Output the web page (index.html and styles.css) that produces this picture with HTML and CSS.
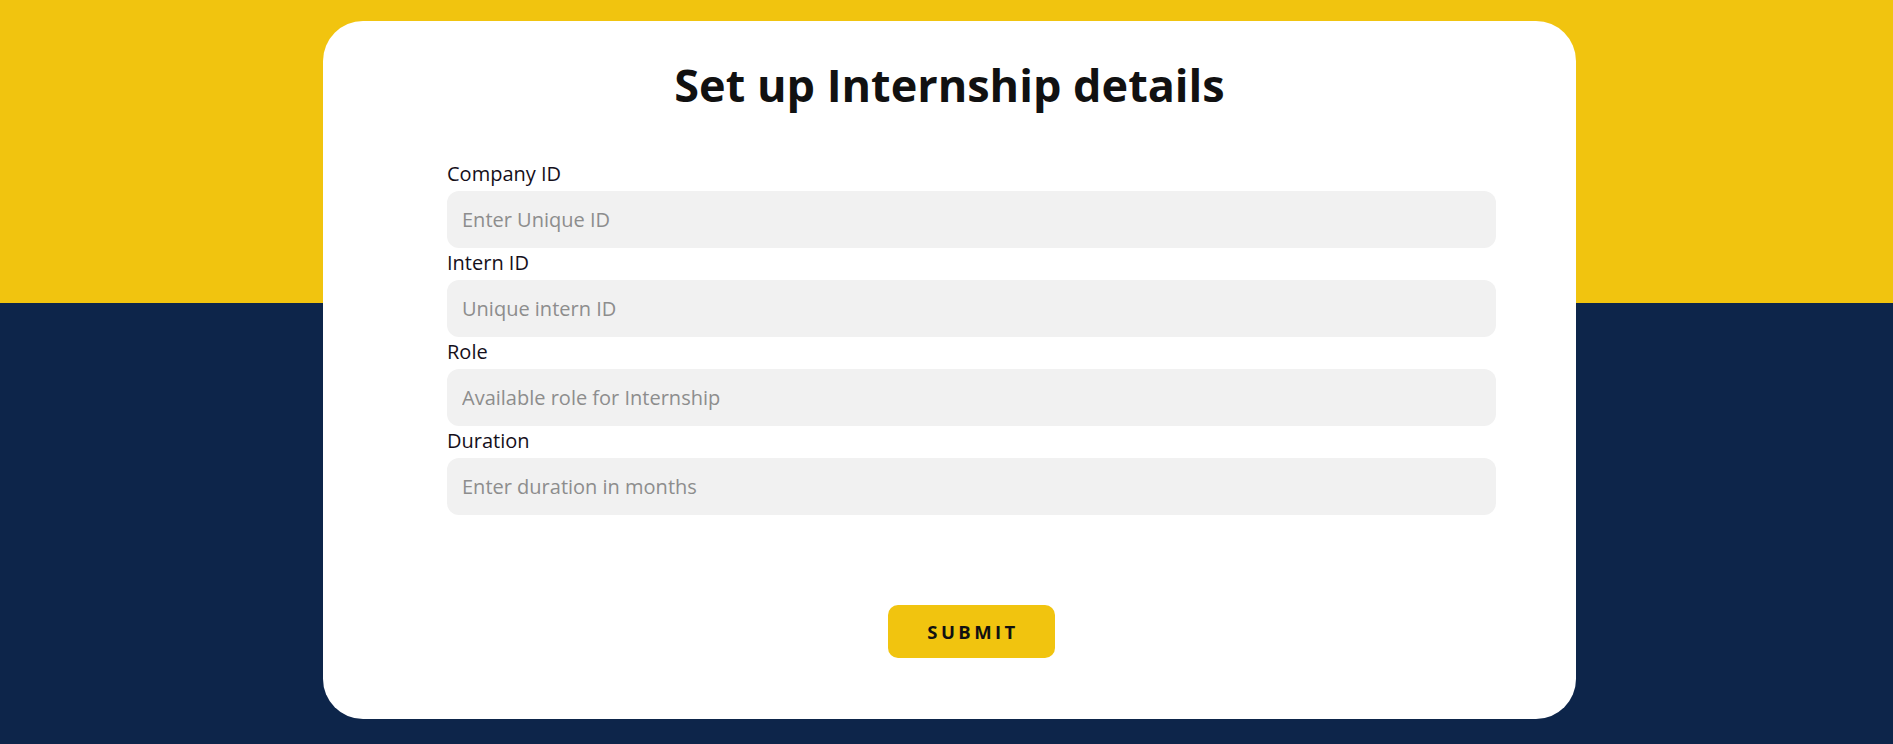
FILE: index.html
```html
<!DOCTYPE html>
<html lang="en">
<head>
<meta charset="utf-8">
<title>Set up Internship details</title>
<link rel="stylesheet" href="styles.css">
</head>
<body>
<main class="page">
  <section class="card">
    <h1 class="title">Set up Internship details</h1>
    <form class="form">
      <div class="field">
        <label class="label" for="cid">Company ID</label>
        <input class="input" id="cid" type="text" placeholder="Enter Unique ID">
      </div>
      <div class="field">
        <label class="label" for="iid">Intern ID</label>
        <input class="input" id="iid" type="text" placeholder="Unique intern ID">
      </div>
      <div class="field">
        <label class="label" for="role">Role</label>
        <input class="input" id="role" type="text" placeholder="Available role for Internship">
      </div>
      <div class="field">
        <label class="label" for="dur">Duration</label>
        <input class="input" id="dur" type="text" placeholder="Enter duration in months">
      </div>
      <div class="actions">
        <button class="submit" type="button">SUBMIT</button>
      </div>
    </form>
  </section>
</main>
</body>
</html>
```

FILE: styles.css
```css
* { box-sizing: border-box; }

html, body {
  margin: 0;
  padding: 0;
}

body {
  font-family: "Open Sans", "Noto Sans", sans-serif;
  background: linear-gradient(to bottom, #f1c40f 0, #f1c40f 303px, #0d254a 303px, #0d254a 100%);
  min-height: 744px;
  overflow: hidden;
}

.page {
  display: flex;
  justify-content: center;
  padding: 21px 0 0 6px;
}

.card {
  width: 1253px;
  height: 698px;
  background: #ffffff;
  border-radius: 40px;
  padding: 33px 0 0;
}

.title {
  margin: 0;
  text-align: center;
  font-size: 45px;
  font-weight: 700;
  line-height: 61px;
  color: #111111;
}

.form {
  margin: 44px 80px 0 124px;
  display: flex;
  flex-direction: column;
}

.field {
  display: flex;
  flex-direction: column;
}

.label {
  font-size: 20px;
  line-height: 30px;
  margin-bottom: 2px;
  color: #150f1a;
}

.input {
  height: 57px;
  border: none;
  outline: none;
  border-radius: 12px;
  background: #f1f1f1;
  padding: 0 15px;
  font-family: inherit;
  font-size: 20px;
  color: #222;
}

.input::placeholder {
  color: #8d8d8d;
}

.actions {
  display: flex;
  justify-content: center;
  margin-top: 90px;
}

.submit {
  width: 167px;
  height: 53px;
  border: none;
  border-radius: 10px;
  background: #f1c40f;
  font-family: inherit;
  font-size: 18.5px;
  font-weight: 700;
  letter-spacing: 3.4px;
  padding: 0 0 0 3px;
  color: #111111;
}
```
